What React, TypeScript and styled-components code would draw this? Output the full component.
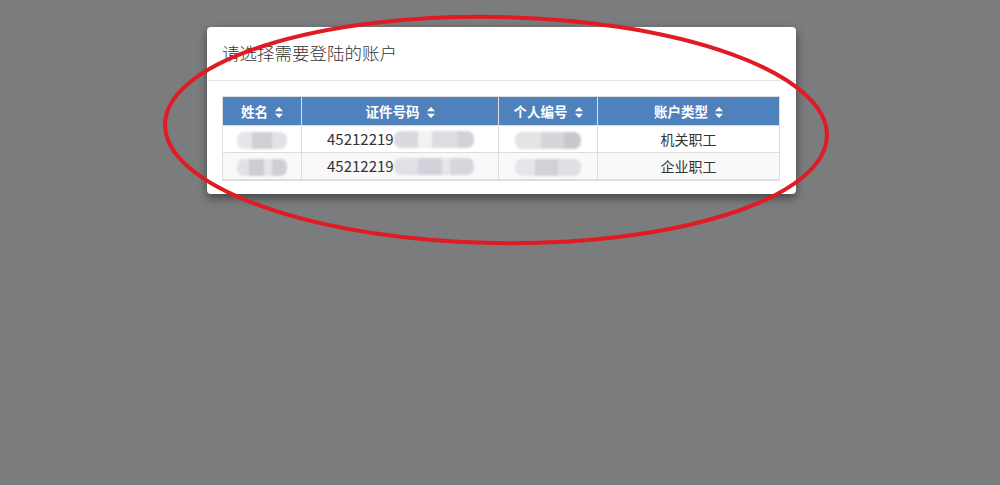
import styled, { createGlobalStyle } from 'styled-components';

const GlobalStyle = createGlobalStyle`
  html, body {
    margin: 0;
    padding: 0;
    background: #7b7c7e;
    font-family: "Noto Sans CJK SC", "Liberation Sans", sans-serif;
  }
`;

const Page = styled.div`
  position: relative;
  width: 1000px;
  height: 485px;
  overflow: hidden;
  padding-top: 27px;
  box-sizing: border-box;
`;

const Modal = styled.div`
  margin-left: 207px;
  width: 589px;
  background: #fff;
  border-radius: 4px;
  box-shadow: 0 4px 10px rgb(0 0 0 / 45%);
`;

const Header = styled.div`
  padding: 14px 15px 15px;
  border-bottom: 1px solid #e5e5e5;
`;

const Title = styled.h4`
  margin: 0;
  font-size: 17.5px;
  font-weight: 300;
  line-height: 24px;
  color: #333;
`;

const Body = styled.div`
  padding: 15px 16px 13px 15px;
`;

const Table = styled.table`
  width: 100%;
  border-collapse: collapse;
  table-layout: fixed;
  border: 1px solid #ddd;
  border-bottom: 2px solid #ddd;
  font-size: 14px;
  color: #333;
`;

const Th = styled.th<{ $w?: number }>`
  width: ${(p) => (p.$w ? `${p.$w}px` : 'auto')};
  height: 28px;
  padding: 0;
  background: #4f81bd;
  color: #fff;
  font-size: 13.5px;
  font-weight: bold;
  text-align: center;
  border-right: 1px solid #ddd;

  &:last-child {
    border-right: none;
  }
`;

const Row = styled.tr<{ $striped?: boolean }>`
  background: ${(p) => (p.$striped ? '#f9f9f9' : '#fff')};
`;

const Td = styled.td<{ $align?: string }>`
  height: 26px;
  padding: 0;
  text-align: ${(p) => p.$align || 'center'};
  border-top: 1px solid #ddd;
  border-right: 1px solid #ddd;
  white-space: nowrap;
  overflow: hidden;

  &:last-child {
    border-right: none;
  }
`;

const IdText = styled.span`
  display: inline-flex;
  align-items: center;
  padding-left: 25px;
  font-size: 15px;
  line-height: 20px;
`;

const Blur = styled.span<{ $w: number; $shade: string }>`
  display: inline-block;
  vertical-align: middle;
  width: ${(p) => p.$w}px;
  height: 17px;
  border-radius: 7px;
  background: ${(p) => p.$shade};
  filter: blur(1.2px);
`;

const SortIcon = styled.svg`
  width: 8px;
  height: 11px;
  margin-left: 7px;
  vertical-align: -1px;
`;

const Annotation = styled.svg`
  position: absolute;
  left: 0;
  top: 0;
  pointer-events: none;
`;

function Sort() {
  return (
    <SortIcon viewBox="0 0 8 11">
      <path d="M4 0 L8 4.3 L0 4.3 Z M0 6.7 L8 6.7 L4 11 Z" fill="#fff" />
    </SortIcon>
  );
}

const rows = [
  {
    type: '机关职工',
    a: 'linear-gradient(90deg, #e6e6ea 0 30%, #cfd0d4 30% 70%, #e2e2e6 70%)',
    b: 'linear-gradient(90deg, #d9d9de 0 30%, #f2f2f4 30% 48%, #dcdce2 48% 80%, #d2d2d8 80%)',
    c: 'linear-gradient(90deg, #e4e4e6 0 40%, #d6d6da 40% 75%, #c9c9cd 75%)',
  },
  {
    type: '企业职工',
    a: 'linear-gradient(90deg, #e2e2e6 0 25%, #cdcdd2 25% 55%, #e6e6ea 55% 70%, #cfcfd5 70%)',
    b: 'linear-gradient(90deg, #e0e0e6 0 30%, #d2d3da 30% 60%, #e6e6ea 60% 70%, #d6d6dc 70%)',
    c: 'linear-gradient(90deg, #e6e6ea 0 30%, #d2d2d6 30% 65%, #e0e0e4 65%)',
  },
];

function App() {
  return (
    <>
      <GlobalStyle />
      <Page>
        <Modal>
          <Header>
            <Title>请选择需要登陆的账户</Title>
          </Header>
          <Body>
            <Table>
              <thead>
                <tr>
                  <Th $w={78}>姓名<Sort /></Th>
                  <Th $w={196}>证件号码<Sort /></Th>
                  <Th $w={98}>个人编号<Sort /></Th>
                  <Th>账户类型<Sort /></Th>
                </tr>
              </thead>
              <tbody>
                {rows.map((r, i) => (
                  <Row key={r.type} $striped={i === 1}>
                    <Td><Blur $w={50} $shade={r.a} /></Td>
                    <Td $align="left">
                      <IdText>
                        45212219
                        <Blur $w={80} $shade={r.b} />
                      </IdText>
                    </Td>
                    <Td><Blur $w={66} $shade={r.c} /></Td>
                    <Td>{r.type}</Td>
                  </Row>
                ))}
              </tbody>
            </Table>
          </Body>
        </Modal>
        <Annotation width="1000" height="485">
          <ellipse
            cx="496"
            cy="130"
            rx="331"
            ry="113"
            fill="none"
            stroke="#e11b24"
            strokeWidth="4"
            transform="rotate(1 496 130)"
          />
        </Annotation>
      </Page>
    </>
  );
}

export default App;
